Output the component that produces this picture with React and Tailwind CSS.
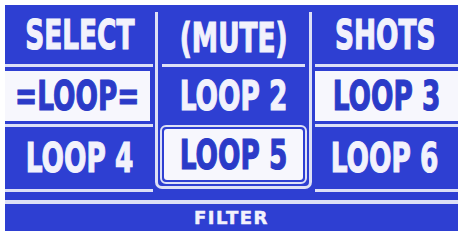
import React from 'react';

const font = { fontFamily: '"DejaVu Sans", "Liberation Sans", sans-serif' };

const Label = ({ children, dark }) => (
  <span
    className={`inline-block whitespace-nowrap text-[40px] font-bold leading-none scale-x-[0.66] [-webkit-text-stroke:1.2px_currentColor] ${dark ? 'text-[#2b3bc8]' : 'text-[#f2f2fc]'}`}
  >
    {children}
  </span>
);

const Line = ({ className = '' }) => <div className={`h-[3px] shrink-0 bg-[#dde0f6] ${className}`} />;

const App = () => {
  return (
    <div className="w-[465px] h-[231px] bg-white pt-[5px] pl-[5px] overflow-hidden" style={font}>
      <div className="w-[453px] h-[226px] bg-[#2e3fd2] flex flex-col">
        {/* cells */}
        <div className="flex items-start h-[187px] shrink-0">
          {/* left column */}
          <div className="w-[150px] h-full flex flex-col">
            <div className="h-[59px] shrink-0 flex items-center justify-center">
              <Label>SELECT</Label>
            </div>
            <Line className="mr-[2px]" />
            <div className="h-[4px] shrink-0" />
            <div className="h-[50px] shrink-0 mr-[5px] bg-[#f7f7fd] flex items-center justify-center">
              <Label dark>=LOOP=</Label>
            </div>
            <div className="h-[3px] shrink-0" />
            <Line className="mr-[2px]" />
            <div className="flex-1 flex items-center justify-center">
              <Label>LOOP 4</Label>
            </div>
            <Line className="mr-[2px]" />
          </div>

          {/* middle column, framed */}
          <div className="w-[157px] h-[184px] flex flex-col">
            <div className="h-[7px] shrink-0" />
            <div className="flex-1 min-h-0 flex flex-col border-x-[3px] border-b-[3px] border-[#dde0f6] rounded-b-[7px]">
              <div className="h-[52px] shrink-0 flex items-center justify-center">
                <Label>(MUTE)</Label>
              </div>
              <Line className="mx-[4px]" />
              <div className="h-[58px] shrink-0 flex items-center justify-center">
                <Label>LOOP 2</Label>
              </div>
              <div className="flex-1 min-h-0 px-[2px] pb-[2px] flex">
                <div className="flex-1 min-w-0 border-[2px] border-[#dde0f6] rounded-[6px] p-[2px] flex">
                  <div className="flex-1 min-w-0 bg-[#f7f7fd] rounded-[3px] flex items-center justify-center">
                    <Label dark>LOOP 5</Label>
                  </div>
                </div>
              </div>
            </div>
          </div>

          {/* right column */}
          <div className="w-[146px] h-full flex flex-col">
            <div className="h-[59px] shrink-0 flex items-center justify-center">
              <Label>SHOTS</Label>
            </div>
            <Line className="ml-[3px]" />
            <div className="h-[4px] shrink-0" />
            <div className="h-[50px] shrink-0 ml-[3px] bg-[#f7f7fd] flex items-center justify-center">
              <Label dark>LOOP 3</Label>
            </div>
            <div className="h-[3px] shrink-0" />
            <Line className="ml-[3px]" />
            <div className="flex-1 flex items-center justify-center">
              <Label>LOOP 6</Label>
            </div>
            <Line className="ml-[3px]" />
          </div>
        </div>

        <div className="h-[8px] shrink-0" />
        <div className="h-[4px] shrink-0 bg-[#dde0f6]" />
        <div className="h-[1px] shrink-0" />
        <div className="flex-1 flex items-center justify-center">
          <span className="text-[18px] font-bold leading-none tracking-[1.5px] text-[#f2f2fc] [-webkit-text-stroke:0.5px_currentColor]">FILTER</span>
        </div>
      </div>
    </div>
  );
};

export default App;
